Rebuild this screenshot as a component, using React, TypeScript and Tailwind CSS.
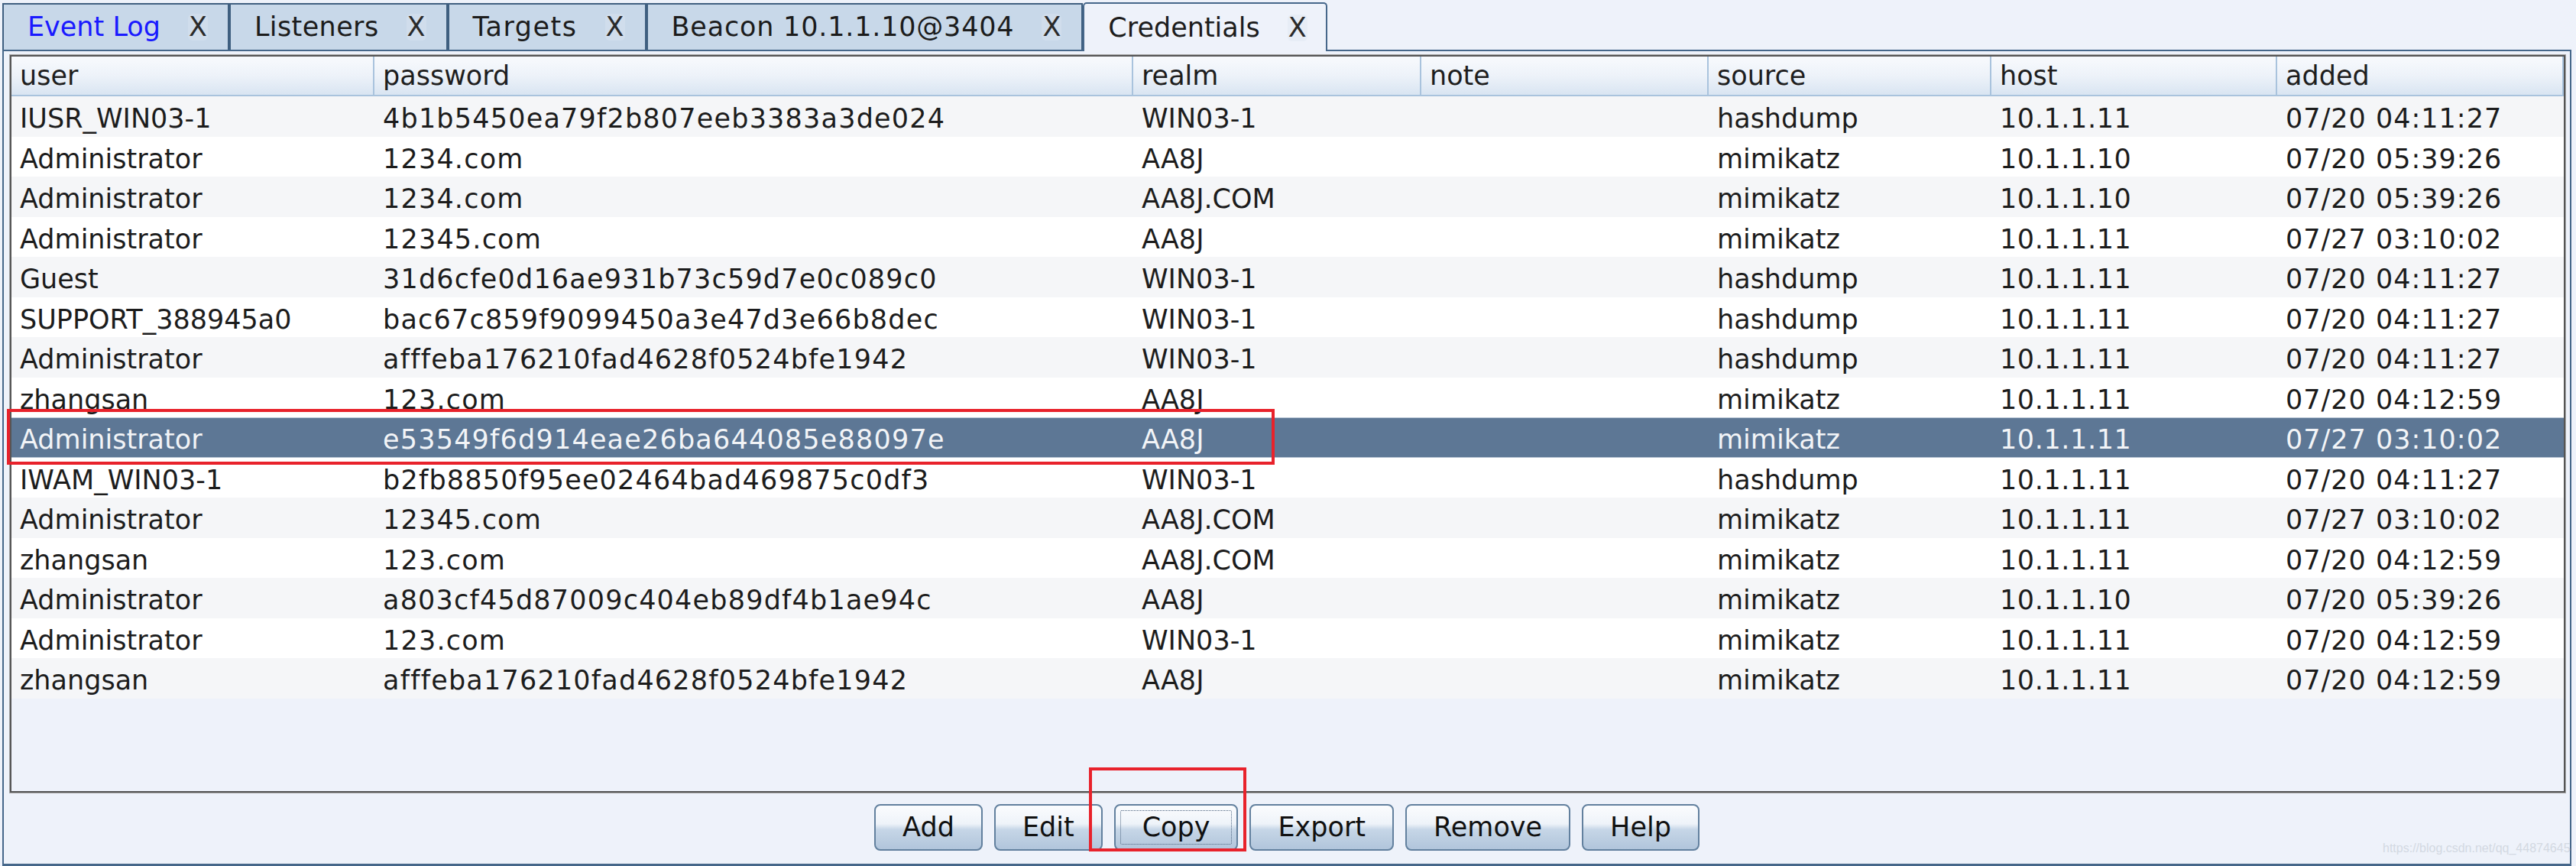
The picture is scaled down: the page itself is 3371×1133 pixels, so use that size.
import React from "react";

type Row = [string, string, string, string, string, string, string];

const rows: Row[] = [
  ["IUSR_WIN03-1", "4b1b5450ea79f2b807eeb3383a3de024", "WIN03-1", "", "hashdump", "10.1.1.11", "07/20 04:11:27"],
  ["Administrator", "1234.com", "AA8J", "", "mimikatz", "10.1.1.10", "07/20 05:39:26"],
  ["Administrator", "1234.com", "AA8J.COM", "", "mimikatz", "10.1.1.10", "07/20 05:39:26"],
  ["Administrator", "12345.com", "AA8J", "", "mimikatz", "10.1.1.11", "07/27 03:10:02"],
  ["Guest", "31d6cfe0d16ae931b73c59d7e0c089c0", "WIN03-1", "", "hashdump", "10.1.1.11", "07/20 04:11:27"],
  ["SUPPORT_388945a0", "bac67c859f9099450a3e47d3e66b8dec", "WIN03-1", "", "hashdump", "10.1.1.11", "07/20 04:11:27"],
  ["Administrator", "afffeba176210fad4628f0524bfe1942", "WIN03-1", "", "hashdump", "10.1.1.11", "07/20 04:11:27"],
  ["zhangsan", "123.com", "AA8J", "", "mimikatz", "10.1.1.11", "07/20 04:12:59"],
  ["Administrator", "e53549f6d914eae26ba644085e88097e", "AA8J", "", "mimikatz", "10.1.1.11", "07/27 03:10:02"],
  ["IWAM_WIN03-1", "b2fb8850f95ee02464bad469875c0df3", "WIN03-1", "", "hashdump", "10.1.1.11", "07/20 04:11:27"],
  ["Administrator", "12345.com", "AA8J.COM", "", "mimikatz", "10.1.1.11", "07/27 03:10:02"],
  ["zhangsan", "123.com", "AA8J.COM", "", "mimikatz", "10.1.1.11", "07/20 04:12:59"],
  ["Administrator", "a803cf45d87009c404eb89df4b1ae94c", "AA8J", "", "mimikatz", "10.1.1.10", "07/20 05:39:26"],
  ["Administrator", "123.com", "WIN03-1", "", "mimikatz", "10.1.1.11", "07/20 04:12:59"],
  ["zhangsan", "afffeba176210fad4628f0524bfe1942", "AA8J", "", "mimikatz", "10.1.1.11", "07/20 04:12:59"],
];

const headers = ["user", "password", "realm", "note", "source", "host", "added"];
const tracking = ["", "tracking-[1.2px]", "", "", "", "tracking-[0.6px]", "tracking-[1px]"];

const GRID = "grid grid-cols-[475px_993px_377px_376px_370px_374px_375px]";

function Tab({ label, active, blue, track }: { label: string; active?: boolean; blue?: boolean; track?: string }) {
  return (
    <div
      className={
        active
          ? "h-[64px] -mb-[2px] bg-[#eef2fa] border-2 border-b-0 border-[#46678a] rounded-t-[5px] flex items-center pl-[31px] pr-[24px]"
          : "h-[61px] bg-[#c8d8e9] border-2 border-b-0 border-[#3f5f80] flex items-center pl-[31px] pr-[26px]"
      }
    >
      <span className={(blue ? "text-[#1a1aff]" : "text-[#1c1c1c]") + (track ? " " + track : "")}>{label}</span>
      <span className="ml-[36px] text-[#2a2a2a] rounded-[6px] bg-[#dbe5f0]/40 px-[1px]">X</span>
    </div>
  );
}

function Btn({ label, focus }: { label: string; focus?: boolean }) {
  return (
    <div className="relative h-[61px] px-[35px] flex items-center rounded-[8px] border-2 border-[#62809e] bg-[linear-gradient(to_bottom,#fbfcfe_0%,#eef3f9_42%,#c6d6e7_55%,#b1c5db_100%)] text-[#111]">
      {focus && <div className="absolute inset-[6px] border border-dotted border-[#4d6480] rounded-[2px]" />}
      <span>{label}</span>
    </div>
  );
}

export default function App() {
  return (
    <div className="relative w-[3371px] h-[1133px] overflow-hidden bg-[#eef2fa] font-['DejaVu_Sans',sans-serif] text-[35px] leading-none text-[#1c1c1c]">
      {/* tab bar */}
      <div className="ml-[3px] w-[3362px] h-[67px] flex items-end border-b-2 border-[#46678a]">
        <Tab label="Event Log" blue />
        <Tab label="Listeners" track="tracking-[0.4px]" />
        <Tab label="Targets" track="tracking-[1.5px]" />
        <Tab label="Beacon 10.1.1.10@3404" track="tracking-[0.8px]" />
        <Tab label="Credentials" active />
      </div>

      {/* content panel */}
      <div className="ml-[3px] w-[3362px] h-[1066px] border-x-2 border-b-[3px] border-[#46678a] flex flex-col pl-[8px] pr-[6px] pt-[5px]">
        <div className="h-[965px] border-2 border-[#555] shadow-[0_0_0_1px_#a9a9a9] flex flex-col">
          {/* header */}
          <div className={GRID + " h-[52px] border-b-2 border-[#a9c3dd] bg-[linear-gradient(to_bottom,#f8fafd_0%,#edf2f9_50%,#d9e5f2_100%)]"}>
            {headers.map((h) => (
              <div key={h} className="h-full flex items-center pl-[11px] border-r-2 border-[#a9c3dd] text-[#1e1e1e]">
                {h}
              </div>
            ))}
          </div>
          {/* rows */}
          {rows.map((r, i) => {
            const sel = i === 8;
            const bg = sel
              ? "bg-[#5d7795] border-y border-[#b9c6d5] text-[#f2f4f7]"
              : i % 2 === 0
              ? "bg-[#f5f6f8] text-[#1c1c1c]"
              : "bg-white text-[#1c1c1c]";
            return (
              <div key={i} className={GRID + " h-[52.5px] " + bg}>
                {r.map((c, j) => (
                  <div key={j} className={"h-full flex items-center pl-[11px] pt-[7px] whitespace-nowrap " + tracking[j]}>
                    {c}
                  </div>
                ))}
              </div>
            );
          })}
        </div>

        {/* buttons */}
        <div className="flex justify-center items-start pt-[15px] gap-[15px] pr-[2px]">
          <Btn label="Add" />
          <Btn label="Edit" />
          <Btn label="Copy" focus />
          <Btn label="Export" />
          <Btn label="Remove" />
          <Btn label="Help" />
        </div>
      </div>

      {/* annotation boxes */}
      <div className="absolute left-[9px] top-[535px] w-[1659px] h-[73px] border-4 border-[#e8222b]" />
      <div className="absolute left-[1425px] top-[1004px] w-[206px] h-[110px] border-4 border-[#e8222b]" />

      {/* watermark */}
      <div className="absolute left-[3118px] top-[1102px] text-[16px] font-['Liberation_Sans',sans-serif] text-[#d3d9e2]">
        https://blog.csdn.net/qq_44874645
      </div>
    </div>
  );
}
